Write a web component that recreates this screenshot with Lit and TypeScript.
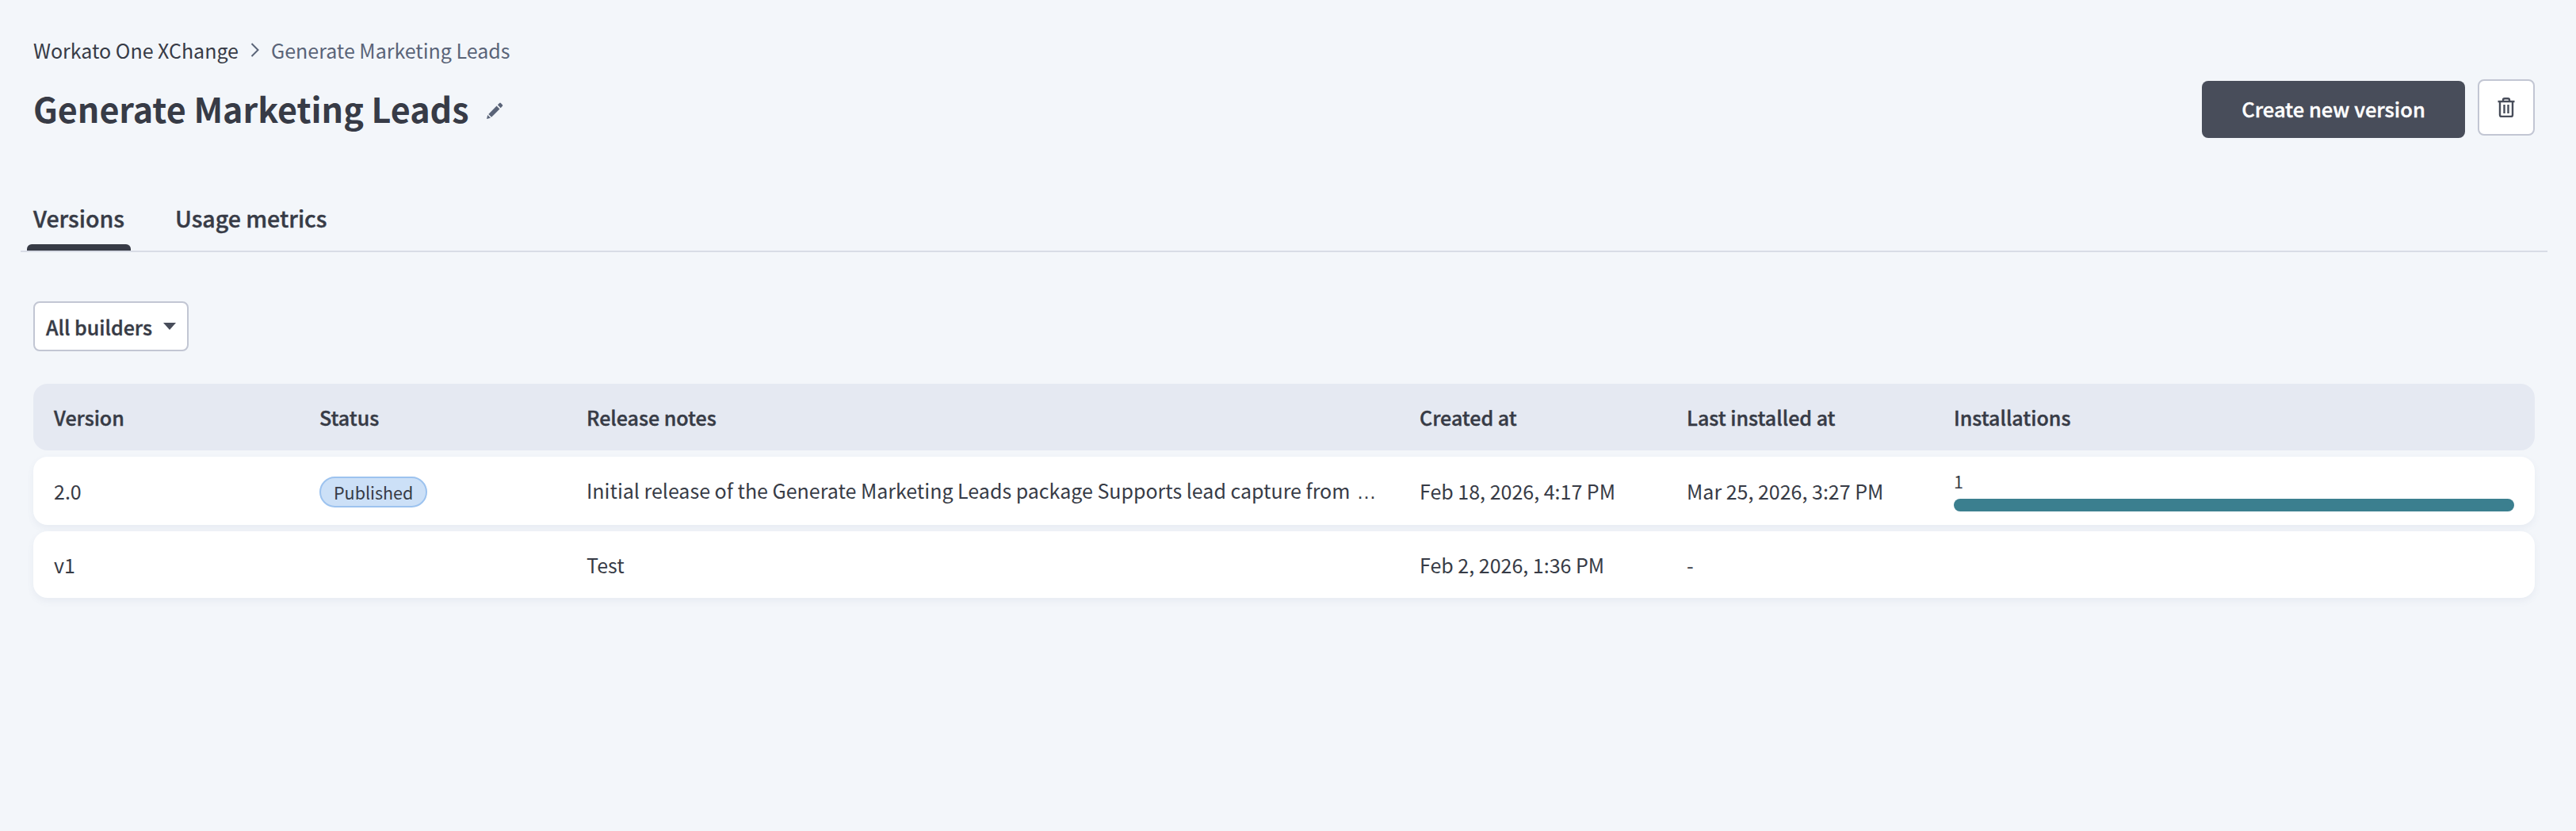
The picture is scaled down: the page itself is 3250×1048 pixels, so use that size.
import { LitElement, html, css } from 'lit';
import { customElement } from 'lit/decorators.js';

interface VersionRow {
  version: string;
  status?: string;
  notes: string;
  truncated?: boolean;
  created: string;
  lastInstalled: string;
  installs?: number;
}

const rows: VersionRow[] = [
  {
    version: '2.0',
    status: 'Published',
    notes: 'Initial release of the Generate Marketing Leads package Supports lead capture from',
    truncated: true,
    created: 'Feb 18, 2026, 4:17 PM',
    lastInstalled: 'Mar 25, 2026, 3:27 PM',
    installs: 1,
  },
  {
    version: 'v1',
    notes: 'Test',
    created: 'Feb 2, 2026, 1:36 PM',
    lastInstalled: '-',
  },
];

@customElement('app-root')
export class AppRoot extends LitElement {
  static styles = css`
    :host {
      display: block;
      min-height: 1048px;
      background: #f3f6fa;
      color: #373b46;
      font-family: 'Noto Sans CJK SC', 'Noto Sans', sans-serif;
      font-size: 25px;
      line-height: 40px;
    }
    .page {
      padding: 43px 52px 0 42px;
    }
    .top {
      display: flex;
      justify-content: space-between;
      align-items: flex-start;
    }
    .breadcrumb {
      display: flex;
      align-items: center;
      gap: 15px;
    }
    .breadcrumb .current {
      color: #5a6478;
    }
    .title-row {
      display: flex;
      align-items: center;
      gap: 22px;
      margin-top: 23px;
    }
    h1 {
      margin: 0;
      font-size: 43px;
      line-height: 60px;
      font-weight: 700;
    }
    .pencil {
      margin-top: 6px;
    }
    .actions {
      display: flex;
      align-items: flex-start;
      gap: 16px;
      padding-top: 57px;
    }
    /* only Medium and Bold are installed, the stroke gets Medium up to semibold */
    .primary,
    .tab,
    .filter,
    .row.head {
      font-weight: 500;
      -webkit-text-stroke: 0.4px currentColor;
    }
    .primary {
      width: 332px;
      height: 72px;
      margin-top: 2px;
      padding: 0 0 3px;
      border: none;
      border-radius: 8px;
      background: #484d5a;
      color: #fff;
      font-family: inherit;
      font-size: 25.5px;
    }
    .icon-btn {
      display: flex;
      align-items: center;
      justify-content: center;
      box-sizing: border-box;
      width: 72px;
      height: 71px;
      padding: 0;
      border: 2px solid #c2c6d3;
      border-radius: 8px;
      background: #fff;
    }
    .tabs {
      display: flex;
      gap: 48px;
      margin: 81px -16px 0;
      padding-left: 8px;
      border-bottom: 2px solid #d8dce6;
      font-size: 28.5px;
    }
    .tab {
      display: flex;
      flex-direction: column;
    }
    .tab span {
      padding: 0 8px;
    }
    .tab i {
      display: block;
      height: 8px;
      margin-top: 13px;
      border-radius: 6px 6px 0 0;
    }
    .tab.active i {
      background: #373b46;
    }
    .filter {
      display: flex;
      align-items: center;
      gap: 14px;
      box-sizing: border-box;
      width: 196px;
      height: 63px;
      margin-top: 62px;
      padding: 0 0 0 14px;
      border: 2px solid #c2c6d3;
      border-radius: 8px;
      background: #fff;
      color: #373b46;
      font-family: inherit;
      font-size: inherit;
      line-height: inherit;
      white-space: nowrap;
    }
    .table {
      display: flex;
      flex-direction: column;
      gap: 8px;
      margin-top: 41px;
    }
    .row {
      display: grid;
      grid-template-columns: 335px 337px 1051px 337px 337px 1fr;
      align-items: center;
      min-height: 84px;
      padding: 0 26px;
      border-radius: 18px;
      background: #fff;
      box-shadow: 0 4px 10px rgba(80, 100, 140, 0.07);
    }
    .row.head {
      background: #e5e9f2;
      box-shadow: none;
    }
    .notes {
      white-space: nowrap;
    }
    .ellipsis {
      margin-left: 8px;
      font-family: 'Liberation Sans', sans-serif;
    }
    .badge {
      display: inline-block;
      box-sizing: border-box;
      height: 39px;
      padding: 0 16px;
      border: 2px solid #9dc3ef;
      border-radius: 20px;
      background: #cce0f7;
      font-size: 21.5px;
      line-height: 35px;
    }
    .installs {
      padding: 15px 0 17px;
    }
    .count {
      font-size: 21.5px;
      line-height: 32px;
    }
    .bar {
      height: 16px;
      margin-top: 6px;
      border-radius: 8px;
      background: #3b7f8f;
    }
  `;

  render() {
    return html`
      <div class="page">
        <div class="top">
          <div>
            <nav class="breadcrumb">
              <span>Workato One XChange</span>
              <svg width="11" height="18" viewBox="0 0 11 18" fill="none" stroke="#5a6478" stroke-width="2">
                <path d="M1.5 1 9.5 9 1.5 17" />
              </svg>
              <span class="current">Generate Marketing Leads</span>
            </nav>
            <div class="title-row">
              <h1>Generate Marketing Leads</h1>
              <svg class="pencil" width="21" height="21" viewBox="0 0 20 20" fill="#5a6478">
                <path d="M0 20 1.2 15.3 4.7 18.8Z" />
                <path d="M2.2 14.2 12 4.4 15.6 8 5.8 17.8Z" />
                <path d="M13.2 3.2 15.4.9Q16.2.2 17 .9L19 3Q19.7 3.8 19 4.6L16.8 6.8Z" />
              </svg>
            </div>
          </div>
          <div class="actions">
            <button class="primary">Create new version</button>
            <button class="icon-btn" aria-label="Delete">
              <svg width="22" height="25" viewBox="0 0 22 25" fill="none" stroke="#484d5a" stroke-width="2.4">
                <path d="M7 4.5V3Q7 1.2 9 1.2H13Q15 1.2 15 3V4.5" />
                <path d="M.5 5H21.5" />
                <path d="M3 5V22Q3 24 5 24H17Q19 24 19 22V5" />
                <path d="M8.5 9V20M13.5 9V20" />
              </svg>
            </button>
          </div>
        </div>

        <div class="tabs">
          <div class="tab active"><span>Versions</span><i></i></div>
          <div class="tab"><span>Usage metrics</span><i></i></div>
        </div>

        <button class="filter">
          All builders
          <svg width="16" height="9" viewBox="0 0 16 9" fill="#484d5a"><path d="M0 0H16L8 9Z" /></svg>
        </button>

        <div class="table">
          <div class="row head">
            <div>Version</div>
            <div>Status</div>
            <div>Release notes</div>
            <div>Created at</div>
            <div>Last installed at</div>
            <div>Installations</div>
          </div>
          ${rows.map(
            (r) => html`
              <div class="row">
                <div>${r.version}</div>
                <div>${r.status ? html`<span class="badge">${r.status}</span>` : ''}</div>
                <div class="notes">${r.notes}${r.truncated ? html`<span class="ellipsis">…</span>` : ''}</div>
                <div>${r.created}</div>
                <div>${r.lastInstalled}</div>
                <div>
                  ${r.installs
                    ? html`<div class="installs">
                        <div class="count">${r.installs}</div>
                        <div class="bar"></div>
                      </div>`
                    : ''}
                </div>
              </div>
            `
          )}
        </div>
      </div>
    `;
  }
}

declare global {
  interface HTMLElementTagNameMap {
    'app-root': AppRoot;
  }
}
